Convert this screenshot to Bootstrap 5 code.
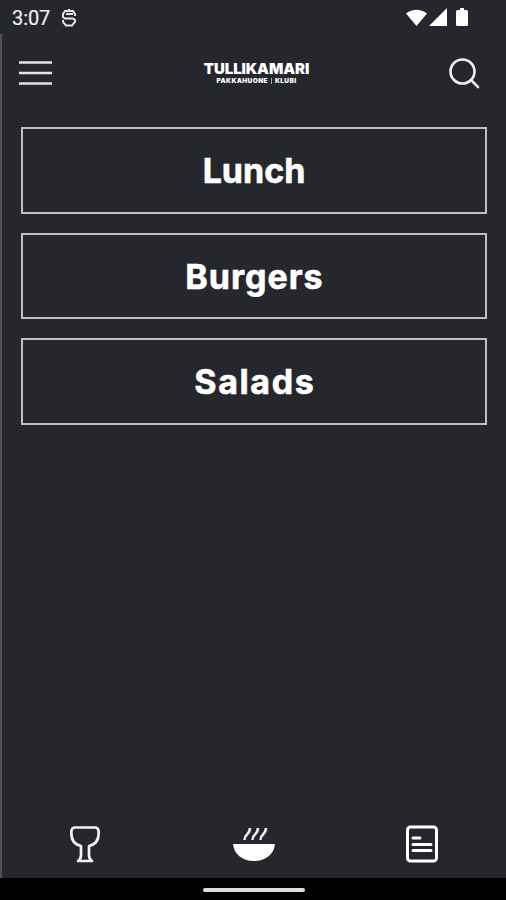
<!DOCTYPE html>
<html lang="en">
<head>
<meta charset="utf-8">
<meta name="viewport" content="width=device-width, initial-scale=1">
<title>Tullikamari</title>
<link href="https://cdn.jsdelivr.net/npm/bootstrap@5.3.0/dist/css/bootstrap.min.css" rel="stylesheet">
<style>
body { background: #26272d; color: #fff; font-family: Inter, "Open Sans", sans-serif; overflow: hidden; }
svg { display: block; flex: none; }
.status { height: 34px; padding: 2px 36px 0 12px; font: 20px/34px Roboto, sans-serif; color: #eee; }
.status-time { width: 49px; letter-spacing: -.1px; -webkit-text-stroke: .2px #eee; }
.screen { border-left: 2px solid #505156; }
.topbar { height: 93px; padding: 0 26px 15px 17px; }
.brand { padding-left: 12px; }
.brand-name { font-size: 15px; font-weight: 900; line-height: 15px; letter-spacing: -.1px; }
.brand-sub { font-size: 6.5px; font-weight: 900; line-height: 8px; letter-spacing: .4px; margin-top: 1px; }
.brand-sub i { width: 1px; height: 6px; background: #aaa; margin: 1px 3px 0; }
.menu-list { padding: 0 19px 0 19px; gap: 19px; }
.menu-btn { height: 86.5px; border: 2px solid #bfc0c3; border-radius: 0; color: #fff; font-size: 34px; font-weight: 700; line-height: 82px; padding: 1px 0 0; -webkit-text-stroke: .6px #fff; }
.menu-btn:hover { color: #fff; border-color: #fff; }
.track-wide { letter-spacing: 1px; margin-right: -1px; }
.track-wider { letter-spacing: 1.600px; margin-right: -1.600px; }
.tabs { height: 68px; }
.sysbar { height: 22px; background: #000; }
.sysbar span { width: 102px; height: 4px; background: #ddd; border-radius: 2px; margin: 2px 0 0 1px; }
</style>
</head>
<body>
<div class="d-flex flex-column vh-100">
  <div class="status d-flex align-items-center">
    <span class="status-time">3:07</span>
    <svg width="16" height="20" viewBox="0 0 16 20" fill="none" stroke="#e5e5e5" stroke-width="2"><path d="M14 8V6L12 3H4L2 6v3l2 1.500h8l2 1.500v2l-3 3.500H5L2 14v-2M5 6h7M8 1v2"/></svg>
    <svg class="ms-auto" width="64" height="20" viewBox="0 0 64 20" fill="#fff"><path d="M0 5.500Q10.500-2 21 5.500L10.500 18ZM23 18 41 0v18ZM50 3.500q0-1.500 1.500-1.500H54V0h4v2h2.500q1.500 0 1.500 1.500v13q0 1.500-1.500 1.500h-9q-1.500 0-1.500-1.500Z"/></svg>
  </div>
  <div class="screen d-flex flex-column flex-grow-1">
    <header class="topbar d-flex align-items-center justify-content-between">
      <svg width="33" height="26" viewBox="0 0 33 26" stroke="#e4e4e6" stroke-width="2.400"><path d="M0 2.500h33M0 13h33M0 23.500h33"/></svg>
      <div class="brand d-flex flex-column align-items-center">
        <div class="brand-name">TULLIKAMARI</div>
        <div class="brand-sub d-flex"><span>PAKKAHUONE</span><i></i><span>KLUBI</span></div>
      </div>
      <svg width="31" height="32" viewBox="0 0 31 32" fill="none" stroke="#f0f0f0" stroke-width="2.600"><circle cx="13.500" cy="14.500" r="12"/><path d="m22 23 7 7" stroke-linecap="round"/></svg>
    </header>
    <main class="menu-list d-grid">
      <button class="btn menu-btn" type="button"><span>Lunch</span></button>
      <button class="btn menu-btn" type="button"><span class="track-wide">Burgers</span></button>
      <button class="btn menu-btn" type="button"><span class="track-wider">Salads</span></button>
    </main>
    <nav class="tabs row g-0 align-items-center mt-auto">
      <div class="col d-flex justify-content-center"><svg width="34" height="38" viewBox="0 0 34 38" fill="none" stroke="#f2f2f2" stroke-width="2.700" stroke-linejoin="round"><path d="M6 2.500h20q3 0 3.500 3c1 9-3 14-9.500 15.500v9q0 4 3 6H9q3-2 3-6v-9C5.500 19.500 1.500 14.500 2.500 5.500q.5-3 3.500-3Z"/></svg></div>
      <div class="col d-flex justify-content-center"><svg width="44" height="38" viewBox="0 0 44 38"><path d="M1 19h42c-1 10-9 17-21 17S2 29 1 19Z" fill="#fff"/><path d="M12.500 15c0-7 5-4 5.500-12M20.500 15c0-7 5-4 5.500-12M28.500 15c0-7 5-4 5.500-12" fill="none" stroke="#eee" stroke-width="2.600"/></svg></div>
      <div class="col d-flex justify-content-center"><svg width="34" height="38" viewBox="0 0 34 38" fill="none" stroke="#fff"><rect x="2.500" y="2" width="29" height="34" rx="3" stroke-width="3"/><path d="M8 13h7M8 19.500h18M8 25.500h18" stroke-width="3" stroke-linecap="round"/></svg></div>
    </nav>
  </div>
  <div class="sysbar d-flex justify-content-center align-items-center"><span></span></div>
</div>
<script src="https://cdn.jsdelivr.net/npm/bootstrap@5.3.0/dist/js/bootstrap.bundle.min.js"></script>
</body>
</html>
